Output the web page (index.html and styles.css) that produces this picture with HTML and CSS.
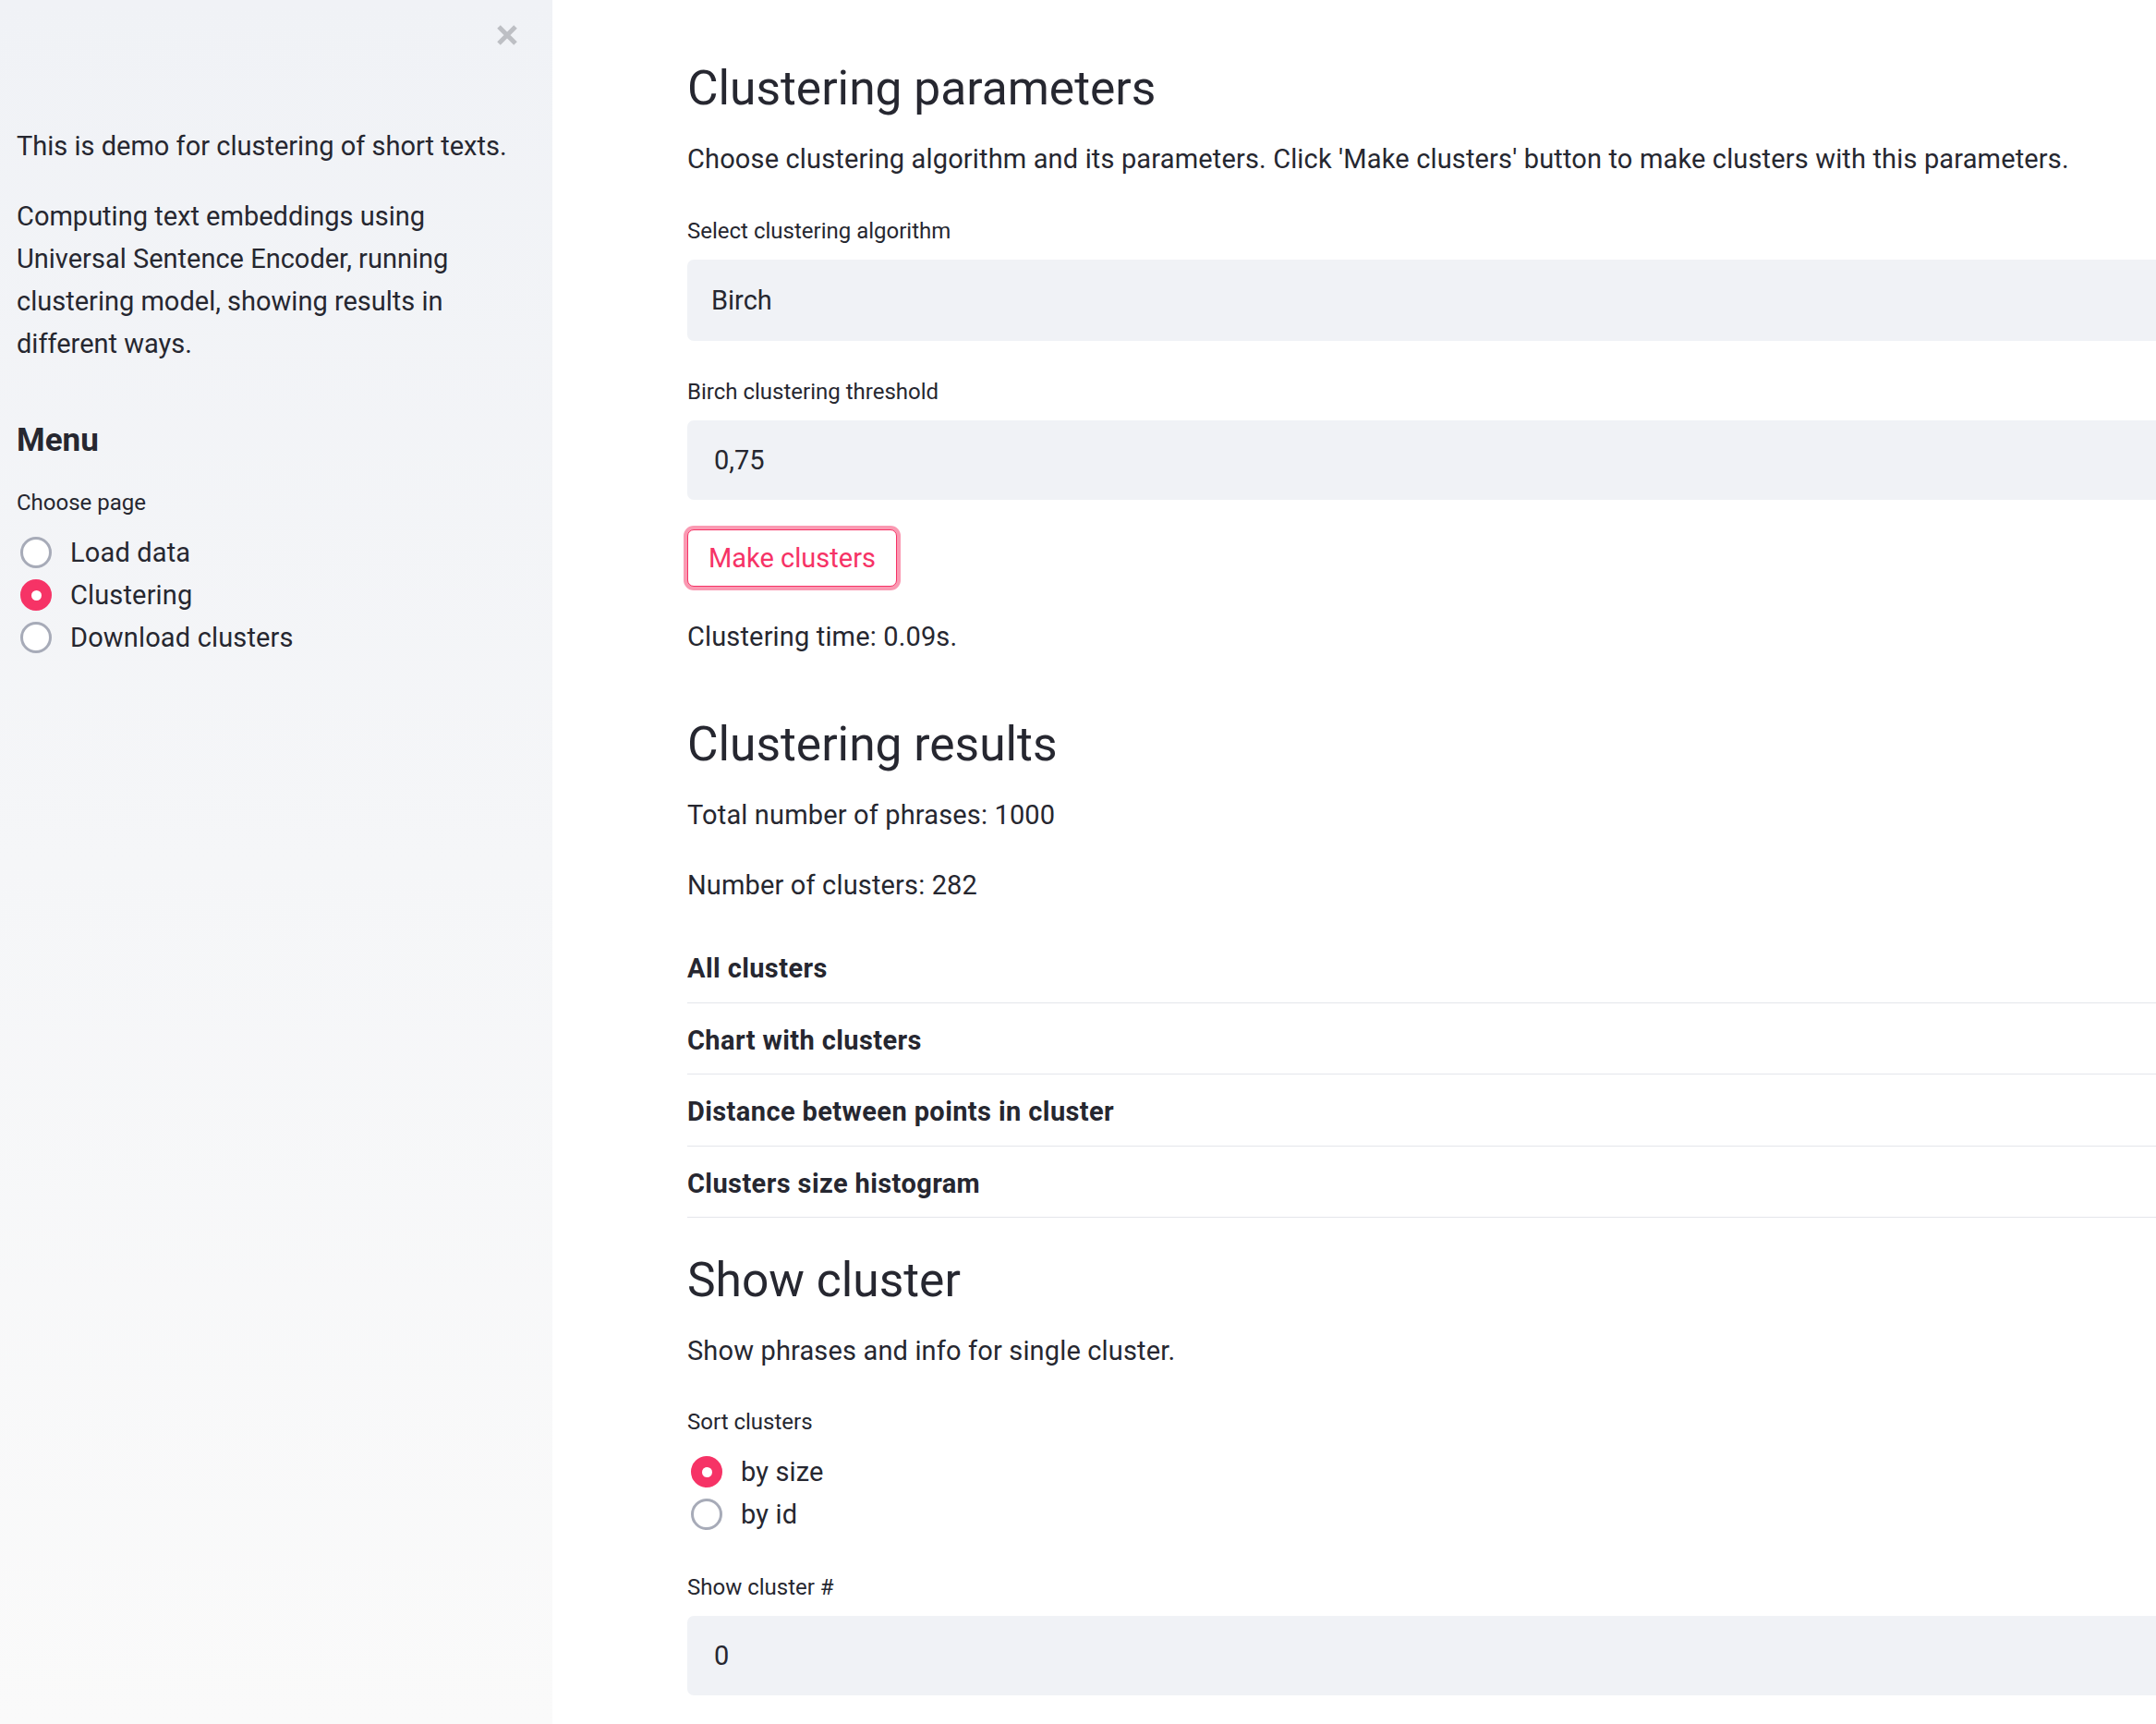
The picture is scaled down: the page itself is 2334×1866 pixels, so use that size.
FILE: index.html
```html
<!DOCTYPE html>
<html lang="en">
<head>
<meta charset="utf-8">
<title>Clustering demo</title>
<link rel="stylesheet" href="styles.css">
</head>
<body>
<div class="app">
  <aside class="sidebar">
    <div class="sidebar-top">
      <button class="close-btn" aria-label="Close sidebar">
        <svg width="26" height="26" viewBox="0 0 26 26"><path d="M4 4 L22 22 M22 4 L4 22" stroke="#bdbfc4" stroke-width="5" fill="none"/></svg>
      </button>
    </div>
    <p class="side-p first">This is demo for clustering of short texts.</p>
    <p class="side-p">Computing text embeddings using Universal Sentence Encoder, running clustering model, showing results in different ways.</p>
    <h3 class="side-h">Menu</h3>
    <div class="widget-label side-label">Choose page</div>
    <div class="radio-group">
      <div class="radio"><span class="dot"></span><span>Load data</span></div>
      <div class="radio checked"><span class="dot"></span><span>Clustering</span></div>
      <div class="radio"><span class="dot"></span><span>Download clusters</span></div>
    </div>
  </aside>
  <main class="main">
    <h2 class="title first">Clustering parameters</h2>
    <p class="text after-title">Choose clustering algorithm and its parameters. Click 'Make clusters' button to make clusters with this parameters.</p>
    <div class="widget-label gap-l">Select clustering algorithm</div>
    <div class="field select">Birch</div>
    <div class="widget-label gap-l">Birch clustering threshold</div>
    <div class="field number">0,75</div>
    <button class="btn">Make clusters</button>
    <p class="text after-btn">Clustering time: 0.09s.</p>
    <h2 class="title results">Clustering results</h2>
    <p class="text after-title">Total number of phrases: 1000</p>
    <p class="text gap-p">Number of clusters: 282</p>
    <div class="expanders">
      <div class="expander">All clusters</div>
      <div class="expander">Chart with clusters</div>
      <div class="expander">Distance between points in cluster</div>
      <div class="expander">Clusters size histogram</div>
    </div>
    <h2 class="title show">Show cluster</h2>
    <p class="text after-title">Show phrases and info for single cluster.</p>
    <div class="widget-label gap-l2">Sort clusters</div>
    <div class="radio-group">
      <div class="radio checked"><span class="dot"></span><span>by size</span></div>
      <div class="radio"><span class="dot"></span><span>by id</span></div>
    </div>
    <div class="widget-label gap-l3">Show cluster #</div>
    <div class="field number">0</div>
  </main>
</div>
</body>
</html>
```

FILE: styles.css
```css
html, body {
  margin: 0;
  padding: 0;
}
body {
  font-family: Roboto, "Liberation Sans", Arial, sans-serif;
  color: #262730;
  background: #ffffff;
  overflow: hidden;
}
.app {
  display: flex;
  height: 1866px;
}

/* Sidebar */
.sidebar {
  width: 598px;
  flex: none;
  box-sizing: border-box;
  padding: 25px 18px 0 18px;
  background: linear-gradient(180deg, #f0f2f6 0%, #fafafa 100%);
  display: flex;
  flex-direction: column;
}
.sidebar-top {
  display: flex;
  justify-content: flex-end;
  height: 26px;
  padding-right: 18px;
}
.close-btn {
  border: 0;
  padding: 0;
  margin: 0;
  background: transparent;
  width: 26px;
  height: 26px;
  display: block;
}
.close-btn svg { display: block; }
.side-p {
  font-size: 29px;
  line-height: 46px;
  margin: 30px 0 0 0;
}
.side-p.first { margin-top: 84px; }
.side-h {
  font-size: 35px;
  font-weight: 700;
  line-height: 42px;
  margin: 61px 0 0 0;
}
.widget-label {
  font-size: 24px;
  line-height: 36px;
}
.side-label { margin-top: 28px; }

.radio-group {
  display: flex;
  flex-direction: column;
  margin-top: 13px;
}
.radio {
  display: flex;
  align-items: center;
  height: 46px;
  font-size: 29px;
  letter-spacing: 0.15px;
}
.dot {
  width: 34px;
  height: 34px;
  box-sizing: border-box;
  border-radius: 50%;
  border: 3px solid #a7abb8;
  background: #ffffff;
  margin-left: 4px;
  margin-right: 20px;
  flex: none;
  position: relative;
}
.radio.checked .dot {
  background: #f63366;
  border-color: #f63366;
}
.radio.checked .dot::after {
  content: "";
  position: absolute;
  left: 50%;
  top: 50%;
  width: 11px;
  height: 11px;
  margin: -5.5px 0 0 -5.5px;
  border-radius: 50%;
  background: #ffffff;
}

/* Main */
.main {
  flex: 1;
  min-width: 0;
  box-sizing: border-box;
  padding: 65px 0 0 146px;
  display: flex;
  flex-direction: column;
  align-items: stretch;
}
.title {
  font-size: 51.5px;
  font-weight: 400;
  line-height: 62px;
  margin: 0;
}
.title.results { margin-top: 63px; }
.title.show { margin-top: 37px; }
.text {
  font-size: 29px;
  line-height: 46px;
  margin: 0;
  letter-spacing: 0.15px;
}
.after-title { margin-top: 22px; }
.gap-p { margin-top: 30px; }
.after-btn { margin-top: 31px; }
.gap-l { margin-top: 37px; }
.gap-l2 { margin-top: 36px; }
.gap-l3 { margin-top: 38px; }

.field {
  margin-top: 13px;
  background: #f0f2f6;
  border-radius: 7px 0 0 7px;
  font-size: 29px;
  display: flex;
  align-items: center;
  box-sizing: border-box;
  margin-right: -20px;
}
.field.select {
  height: 88px;
  padding-left: 26px;
}
.field.number {
  height: 86px;
  padding-left: 29px;
}

.btn {
  align-self: flex-start;
  margin-top: 32px;
  height: 62px;
  padding: 0 22px;
  border: 1px solid #f63366;
  border-radius: 7px;
  background: #ffffff;
  color: #f63366;
  font-family: inherit;
  font-size: 29px;
  box-shadow: 0 0 0 4px rgba(246, 51, 102, 0.5);
}

.expanders {
  margin-top: 27px;
  display: flex;
  flex-direction: column;
}
.expander {
  height: 77.5px;
  box-sizing: border-box;
  border-bottom: 1px solid #e4e6eb;
  display: flex;
  align-items: center;
  font-size: 29px;
  font-weight: 700;
  letter-spacing: 0.4px;
  padding-top: 4px;
}
```
